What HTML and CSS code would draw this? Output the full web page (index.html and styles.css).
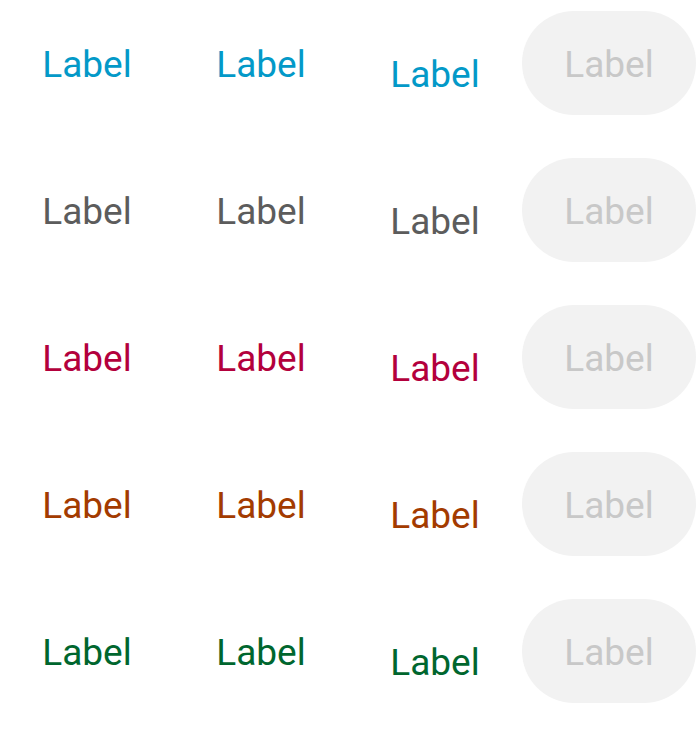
FILE: index.html
```html
<!DOCTYPE html>
<html>
<head>
<meta charset="utf-8">
<link rel="stylesheet" href="styles.css">
</head>
<body>
<div class="grid">
  <div class="row blue">
    <button class="btn">Label</button>
    <button class="btn">Label</button>
    <button class="btn low">Label</button>
    <button class="btn disabled">Label</button>
  </div>
  <div class="row gray">
    <button class="btn">Label</button>
    <button class="btn">Label</button>
    <button class="btn low">Label</button>
    <button class="btn disabled">Label</button>
  </div>
  <div class="row red">
    <button class="btn">Label</button>
    <button class="btn">Label</button>
    <button class="btn low">Label</button>
    <button class="btn disabled">Label</button>
  </div>
  <div class="row orange">
    <button class="btn">Label</button>
    <button class="btn">Label</button>
    <button class="btn low">Label</button>
    <button class="btn disabled">Label</button>
  </div>
  <div class="row green">
    <button class="btn">Label</button>
    <button class="btn">Label</button>
    <button class="btn low">Label</button>
    <button class="btn disabled">Label</button>
  </div>
</div>
</body>
</html>
```
FILE: styles.css
```css
html, body {
  margin: 0;
  padding: 0;
  background: #ffffff;
}
.grid {
  display: flex;
  flex-direction: column;
  gap: 43px;
  padding-top: 11px;
}
.row {
  display: grid;
  grid-template-columns: repeat(4, 174px);
  height: 104px;
}
.btn {
  font-family: Roboto, "Liberation Sans", sans-serif;
  font-size: 37px;
  font-weight: 400;
  border: none;
  background: transparent;
  border-radius: 52px;
  height: 104px;
  width: 174px;
  padding: 2px 0 0 0;
  margin: 0;
  display: flex;
  align-items: center;
  justify-content: center;
  color: inherit;
}
.btn.low {
  padding-top: 22px;
}
.btn.disabled {
  background: #f2f2f2;
  color: #c8c8c8;
}
.blue { color: #0399c8; }
.gray { color: #5c5c5c; }
.red { color: #b3003c; }
.orange { color: #a33b00; }
.green { color: #00662e; }
```
